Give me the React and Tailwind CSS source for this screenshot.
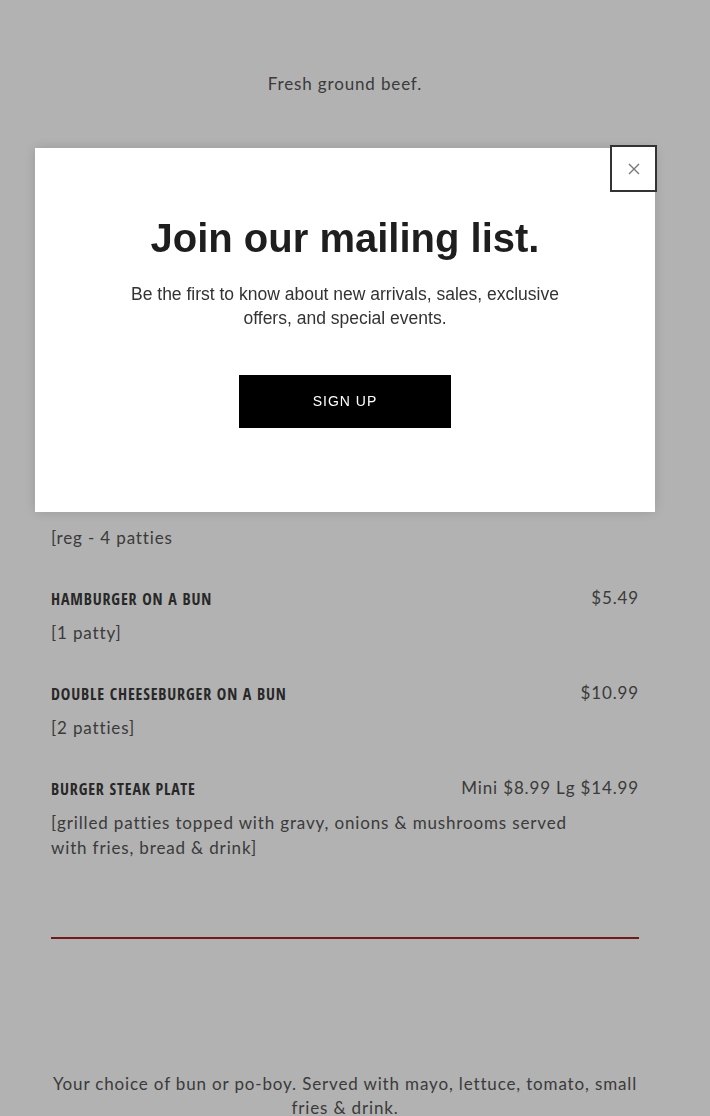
import React from 'react';

const items = [
  { name: 'HAMBURGER ON A BUN', price: '$5.49', desc: '[1 patty]' },
  { name: 'DOUBLE CHEESEBURGER ON A BUN', price: '$10.99', desc: '[2 patties]' },
  {
    name: 'BURGER STEAK PLATE',
    price: 'Mini $8.99 Lg $14.99',
    desc: '[grilled patties topped with gravy, onions & mushrooms served with fries, bread & drink]',
  },
];

const bodyFont = { fontFamily: 'Lato, "Open Sans", sans-serif' };
const titleFont = {
  fontFamily: '"Open Sans Condensed", "DejaVu Sans Condensed", sans-serif',
  fontStretch: 'condensed',
};
const arial = { fontFamily: '"Liberation Sans", Arial, sans-serif' };

function MenuItem({ item }) {
  return (
    <div className="pb-[35px]">
      <div className="flex items-start justify-between">
        <h3
          className="mt-[2px] text-[16px] leading-[24px] font-bold tracking-[0.85px] text-[#3a3a3a]"
          style={titleFont}
        >
          {item.name}
        </h3>
        <span className="mt-[1px] text-[17px] leading-[24px] tracking-[0.85px] text-[#555]" style={bodyFont}>
          {item.price}
        </span>
      </div>
      <p
        className="mt-[9px] max-w-[535px] text-[17px] leading-[25px] tracking-[0.85px] text-[#555]"
        style={bodyFont}
      >
        {item.desc}
      </p>
    </div>
  );
}

function SignupModal() {
  return (
    <div className="fixed inset-0 bg-black/30">
      <div
        className="absolute left-[35px] top-[148px] w-[620px] h-[364px] bg-white shadow-[0_0_12px_rgba(0,0,0,0.15)] text-center"
        style={arial}
      >
        <button className="absolute top-[-3px] right-[-2px] w-[47px] h-[47px] border-2 border-[#333] bg-white flex items-center justify-center">
          <svg width="12" height="12" viewBox="0 0 12 12">
            <path d="M1 1 L11 11 M11 1 L1 11" stroke="#777" strokeWidth="1.4" />
          </svg>
        </button>
        <h2 className="pt-[66px] text-[40px] leading-[48px] font-bold text-[#1e1e1e]">Join our mailing list.</h2>
        <p className="mt-[20px] mx-auto w-[470px] text-[17.5px] leading-[24px] text-[#333]">
          Be the first to know about new arrivals, sales, exclusive offers, and special events.
        </p>
        <button className="mt-[45px] w-[212px] h-[53px] bg-black text-white text-[14px] tracking-[1px]">
          SIGN UP
        </button>
      </div>
    </div>
  );
}

export default function App() {
  return (
    <div className="min-h-[1116px] bg-white">
      <div className="w-[690px] px-[51px]">
        <p
          className="pt-[72px] text-center text-[17px] leading-[24px] tracking-[0.85px] text-[#555]"
          style={bodyFont}
        >
          Fresh ground beef.
        </p>
        <div className="h-[429px]" />
        <p className="pb-[35px] text-[17px] leading-[25px] tracking-[0.85px] text-[#555]" style={bodyFont}>
          [reg - 4 patties
        </p>
        {items.map((item) => (
          <MenuItem key={item.name} item={item} />
        ))}
        <hr className="mt-[42px] border-0 border-t-2 border-[#a32626]" />
        <p
          className="mt-[133px] text-center text-[17px] leading-[24px] tracking-[0.85px] text-[#555]"
          style={bodyFont}
        >
          Your choice of bun or po-boy. Served with mayo, lettuce, tomato, small fries &amp; drink.
        </p>
      </div>
      <SignupModal />
    </div>
  );
}
